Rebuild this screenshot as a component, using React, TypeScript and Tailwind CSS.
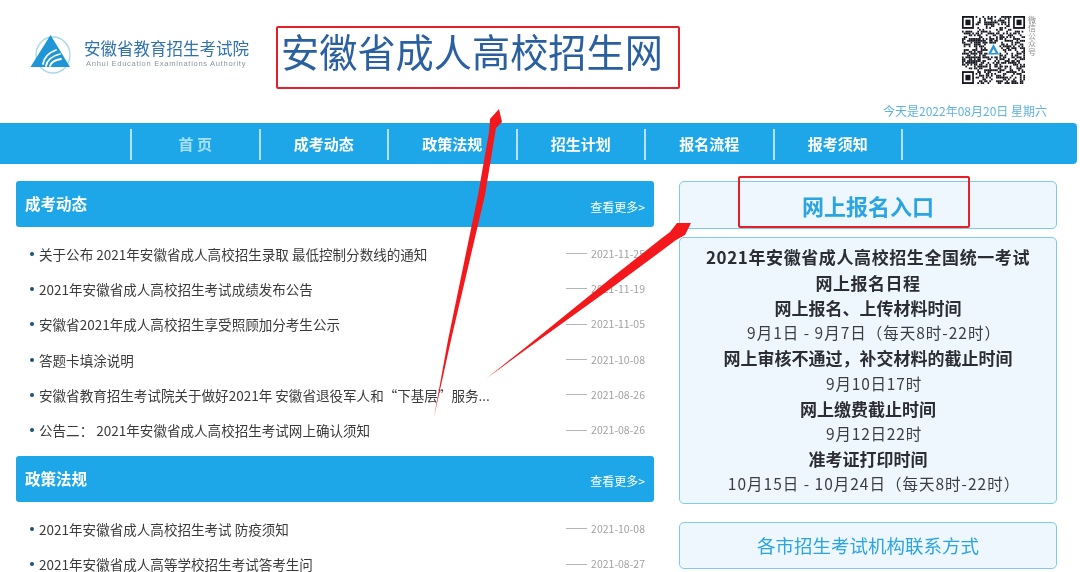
const zh = "font-['Noto_Sans_CJK_SC','Noto_Sans',sans-serif]";

const navItems = ["首 页", "成考动态", "政策法规", "招生计划", "报名流程", "报考须知"];

const news = [
  ["关于公布 2021年安徽省成人高校招生录取 最低控制分数线的通知", "2021-11-25"],
  ["2021年安徽省成人高校招生考试成绩发布公告", "2021-11-19"],
  ["安徽省2021年成人高校招生享受照顾加分考生公示", "2021-11-05"],
  ["答题卡填涂说明", "2021-10-08"],
  ["安徽省教育招生考试院关于做好2021年 安徽省退役军人和“下基层”服务...", "2021-08-26"],
  ["公告二： 2021年安徽省成人高校招生考试网上确认须知", "2021-08-26"],
];

const policy = [
  ["2021年安徽省成人高校招生考试 防疫须知", "2021-10-08"],
  ["2021年安徽省成人高等学校招生考试答考生问", "2021-08-27"],
];

const schedule: [string, string][] = [
  ["2021年安徽省成人高校招生全国统一考试", "text-[17px] font-bold leading-[25.2px] tracking-[0.6px] text-[#2c2c34]"],
  ["网上报名日程", "text-[17px] font-bold leading-[25.2px] tracking-[0.5px] text-[#2c2c34]"],
  ["网上报名、上传材料时间", "text-[17px] font-bold leading-[25.2px] text-[#2c2c34]"],
  ["9月1日 - 9月7日（每天8时-22时）", "pl-[12px] text-[15.5px] leading-[25.2px] tracking-[1px] text-[#3c3c44]"],
  ["网上审核不通过，补交材料的截止时间", "text-[17px] font-bold leading-[25.2px] text-[#2c2c34]"],
  ["9月10日17时", "pl-[12px] text-[15.5px] leading-[25.2px] tracking-[0.8px] text-[#3c3c44]"],
  ["网上缴费截止时间", "text-[17px] font-bold leading-[25.2px] text-[#2c2c34]"],
  ["9月12日22时", "pl-[12px] text-[15.5px] leading-[25.2px] tracking-[0.8px] text-[#3c3c44]"],
  ["准考证打印时间", "text-[17px] font-bold leading-[25.2px] text-[#2c2c34]"],
  ["10月15日 - 10月24日（每天8时-22时）", "pl-[12px] text-[15.5px] leading-[25.2px] tracking-[1px] text-[#3c3c44]"],
];

function Logo() {
  return (
    <svg width="42" height="41" viewBox="0 0 42 41" className="shrink-0">
      <ellipse cx="23" cy="21" rx="17" ry="18" fill="none" stroke="#a9d6ee" strokeWidth="1.3" />
      <path d="M20.5 1 L40 33 L0.5 33 Z" fill="#1f97d6" />
      <g fill="none" stroke="#fff" strokeLinecap="round">
        <path d="M13 30 C14 23 18 19 26 16" strokeWidth="1.8" />
        <path d="M16 32 C17 26 22 22 30 20" strokeWidth="1.8" />
        <path d="M20 32 C21 28 25 26 31 25" strokeWidth="1.8" />
      </g>
    </svg>
  );
}

function Qr() {
  const size = 37;
  const rects = [];
  const inFinder = (x: number, y: number) =>
    (x < 8 && y < 8) || (x > size - 9 && y < 8) || (x < 8 && y > size - 9);
  for (let y = 0; y < size; y++) {
    for (let x = 0; x < size; x++) {
      if (inFinder(x, y)) continue;
      if (x > 14 && x < 22 && y > 14 && y < 22) continue;
      const h = Math.sin(x * 12.9898 + y * 78.233) * 43758.5453;
      if (h - Math.floor(h) < 0.52) rects.push(<rect key={x + "-" + y} x={x} y={y} width="1" height="1" />);
    }
  }
  const finder = (x: number, y: number) => (
    <g key={x + "f" + y}>
      <rect x={x} y={y} width="7" height="7" />
      <rect x={x + 1} y={y + 1} width="5" height="5" fill="#fff" />
      <rect x={x + 2} y={y + 2} width="3" height="3" />
    </g>
  );
  return (
    <svg width="63" height="68" viewBox="0 0 37 37" preserveAspectRatio="none" fill="#15151f">
      {rects}
      {finder(0, 0)}
      {finder(30, 0)}
      {finder(0, 30)}
      <path d="M18.5 15.2 L21.8 21 L15.2 21 Z" fill="#2a97d6" />
      <path d="M18.5 17.8 L19.8 20.2 L17.2 20.2 Z" fill="#fff" />
    </svg>
  );
}

function SectionBar({ title }: { title: string }) {
  return (
    <div className="flex h-[46px] items-center justify-between rounded-[3px] bg-[#1ea7e8] pl-[9px] pr-[9px]">
      <span className="mt-[-1px] text-[15.5px] font-bold text-white">{title}</span>
      <span className="mt-[5px] text-[12px] text-white">查看更多&gt;</span>
    </div>
  );
}

function NewsRow({ title, date }: { title: string; date: string }) {
  return (
    <li className="flex h-[35.3px] items-center justify-between pl-[14px] pr-[9px]">
      <span className="flex items-center text-[13.55px] leading-[14px] text-[#3a3a3a]">
        <span className="mr-[5px] size-[4px] rounded-full bg-[#1d4f80]" />
        {title}
      </span>
      <span className="flex items-center text-[10.5px] leading-[14px] text-[#a2a2a2]">
        <span className="mr-[4px] h-px w-[21px] bg-[#b5b5b5]" />
        {date}
      </span>
    </li>
  );
}

function Arrows() {
  return (
    <svg className="pointer-events-none absolute left-0 top-0" width="1080" height="572" viewBox="0 0 1080 572">
      <path d="M434 417 L448 340 L478 195 L489 132 L490 119 L499 109 L502 122 L496 128 L485 195 L451 340 Z" fill="#f2181c" />
      <path
        d="M487 378 L524.4 348.2 L610.6 278.6 L662 238.1 L670 232 L677 223 L691 223 L685 235 L676 240 L668 246.1 L615.4 285 L525.6 349.8 Z"
        fill="#f2181c"
      />
    </svg>
  );
}

export default function App() {
  return (
    <div className={`relative h-[572px] w-[1080px] overflow-hidden bg-white blur-[0.35px] ${zh}`}>
      <header className="flex h-[123px] pl-[30px] pr-[33px]">
        <div className="flex h-full flex-1">
          <div className="mt-[34px] flex h-[40px] items-start">
            <Logo />
            <div className="ml-[12px] mt-[4px] w-[170px]">
              <div className="whitespace-nowrap text-[16.5px] leading-[20px] text-[#2f72ad]">安徽省教育招生考试院</div>
              <div className="ml-[2px] mt-[1px] whitespace-nowrap font-['Liberation_Sans'] text-[7.6px] leading-[9px] tracking-[0.67px] text-[#8b97a2]">
                Anhui Education Examinations Authority
              </div>
            </div>
          </div>
          <div className="ml-[22px] mt-[26px] flex h-[63px] w-[404px] items-start rounded-[2px] border-[2px] border-[#e5202a] pl-[3px]">
            <span className="whitespace-nowrap text-[38.2px] leading-[46px] text-[#2a609f]">安徽省成人高校招生网</span>
          </div>
        </div>
        <div className="flex w-[90px] flex-col items-end justify-between pb-[4px] pt-[16px]">
          <div className="mr-[11px] flex items-start gap-[3px]">
            <Qr />
            <span className="w-[8px] text-[8px] leading-[8px] text-[#8a8a8a]">微信公众号</span>
          </div>
          <span className="whitespace-nowrap text-[12px] leading-[16px] text-[#5fb2e0]">今天是2022年08月20日 星期六</span>
        </div>
      </header>

      <nav className="flex h-[41px] w-[1077px] rounded-r-[4px] bg-[#1ea7e8] pl-[130px] pt-[6px]">
        {navItems.map((item, i) => (
          <div
            key={item}
            className={`flex h-[31px] w-[128.5px] items-center justify-center border-l-2 border-[#b5e1f6] text-[15px] font-bold ${
              i === 0 ? "text-[#a8e0f8]" : "text-white"
            }`}
          >
            {item}
          </div>
        ))}
        <div className="h-[31px] border-l-2 border-[#b5e1f6]" />
      </nav>

      <main className="flex pl-[16px] pr-[23px] pt-[17px]">
        <div className="w-[638px]">
          <SectionBar title="成考动态" />
          <ul className="pb-[8px] pt-[9px]">
            {news.map(([t, d]) => (
              <NewsRow key={t} title={t} date={d} />
            ))}
          </ul>
          <SectionBar title="政策法规" />
          <ul className="pt-[9.5px]">
            {policy.map(([t, d]) => (
              <NewsRow key={t} title={t} date={d} />
            ))}
          </ul>
        </div>

        <aside className="ml-[25px] flex w-[378px] flex-col">
          <div className="flex h-[48px] items-center justify-center rounded-[5px] border border-[#7fcbe9] bg-[#eef7fd] text-[22px] font-bold text-[#2ba4e2]">
            网上报名入口
          </div>
          <div className="mt-[8px] flex h-[267px] flex-col items-center justify-center rounded-[5px] border border-[#7fcbe9] bg-[#eef7fd]">
            {schedule.map(([line, cls]) => (
              <div key={line} className={cls}>
                {line}
              </div>
            ))}
          </div>
          <div className="mt-[18px] flex h-[47px] items-center justify-center rounded-[5px] border border-[#7fcbe9] bg-[#eef7fd] text-[18.5px] text-[#2ba4e2]">
            各市招生考试机构联系方式
          </div>
        </aside>
      </main>

      <div className="absolute left-[738px] top-[176px] h-[52px] w-[232px] rounded-[2px] border-[2px] border-[#e5202a]" />
      <Arrows />
    </div>
  );
}
